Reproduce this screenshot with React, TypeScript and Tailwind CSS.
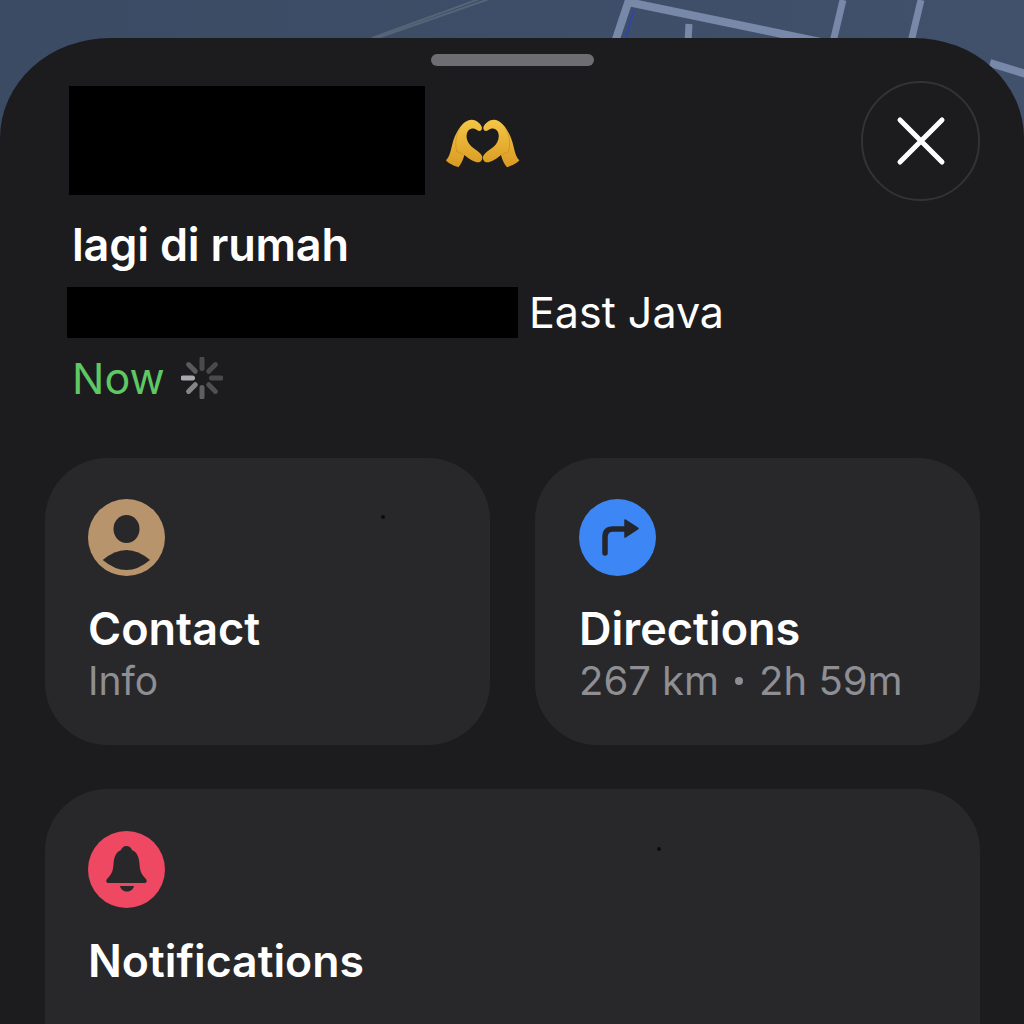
import { ReactNode } from "react";

const font = { fontFamily: '"Inter", "Liberation Sans", sans-serif' };

const handPath =
	"M48 182 C60 170 62 152 68 130 C78 95 100 60 125 60 C140 60 156 75 156 85 C156 94 148 96 142 92 C132 84 118 84 112 98 C106 112 112 130 126 142 C136 150 150 158 156 168 C160 178 153 188 145 188 C130 188 115 175 103 166 C100 180 92 195 85 203 C72 198 55 192 48 182 Z";

const MapLines = () => (
	<svg className="absolute left-0 top-0 blur-[0.5px]" width="1024" height="120" viewBox="0 0 1024 120" fill="none">
		<path d="M492 -2 L366 42 M482 -2 L372 38" stroke="#566477" strokeWidth="2" />
		<path d="M629 0 L614 45" stroke="#7788a8" strokeWidth="8" />
		<path d="M628 2 L830 44" stroke="#7788a8" strokeWidth="8" />
		<path d="M689 24 L688 42" stroke="#7788a8" strokeWidth="7" />
		<path d="M843 0 L833 42" stroke="#7788a8" strokeWidth="7" />
		<path d="M921 0 L911 42" stroke="#7788a8" strokeWidth="7" />
		<path d="M990 63 L1026 74" stroke="#7788a8" strokeWidth="8" />
		<path d="M634 10 L625 40" stroke="#2f45a8" strokeWidth="2" />
	</svg>
);

const HeartHands = () => (
	<svg width="75" height="50" viewBox="45 55 225 150">
		<defs>
			<linearGradient id="gold" x1="0" y1="0" x2="0" y2="1">
				<stop offset="0" stopColor="#f5c645" />
				<stop offset="1" stopColor="#d99a22" />
			</linearGradient>
		</defs>
		<path d={handPath} fill="url(#gold)" />
		<g transform="translate(316 0) scale(-1 1)">
			<path d={handPath} fill="url(#gold)" />
		</g>
		<path d="M90 85 C78 105 74 130 80 155 L100 165 M226 85 C238 105 242 130 236 155 L216 165" stroke="#b57f1f" strokeWidth="3" fill="none" opacity="0.45" />
	</svg>
);

const CloseButton = () => (
	<div className="absolute right-[44px] top-[43px] flex h-[120px] w-[119px] items-center justify-center rounded-full border-2 border-[#333336]">
		<svg width="52" height="52" viewBox="0 0 52 52" fill="none">
			<path d="M5 5 L47 47 M47 5 L5 47" stroke="#ffffff" strokeWidth="5" strokeLinecap="round" />
		</svg>
	</div>
);

const Spinner = () => {
	const spokes = [
		{ a: 0, c: "#4a4a4d" },
		{ a: 45, c: "#4a4a4d" },
		{ a: 90, c: "#4a4a4d" },
		{ a: 135, c: "#4f4f52" },
		{ a: 180, c: "#5f5f62" },
		{ a: 225, c: "#858589" },
		{ a: 270, c: "#a9a9ad" },
		{ a: 315, c: "#5a5a5d" },
	];
	return (
		<svg width="42" height="42" viewBox="-21 -21 42 42">
			{spokes.map((s) => (
				<line key={s.a} x1="0" y1="-9.5" x2="0" y2="-19" stroke={s.c} strokeWidth="5" strokeLinecap="round" transform={`rotate(${s.a})`} />
			))}
		</svg>
	);
};

const IconCircle = ({ color, children }: { color: string; children: ReactNode }) => (
	<svg width="77" height="77" viewBox="0 0 77 77">
		<circle cx="38.5" cy="38.5" r="38.5" fill={color} />
		{children}
	</svg>
);

const ContactIcon = () => (
	<IconCircle color="#b8946c">
		<ellipse cx="38.5" cy="30" rx="13" ry="14" fill="#28282b" />
		<path d="M14.7 61 Q38.5 41 62 61 Q38.5 81 14.7 61 Z" fill="#28282b" />
	</IconCircle>
);

const DirectionsIcon = () => (
	<IconCircle color="#3c87f5">
		<path d="M26 54 V38 Q26 30 34 30 H48" fill="none" stroke="#24262b" strokeWidth="5.5" strokeLinecap="round" />
		<path d="M46 21 L59 29.5 L46 38 Z" fill="#24262b" stroke="#24262b" strokeWidth="1.5" strokeLinejoin="round" />
	</IconCircle>
);

const BellIcon = () => (
	<IconCircle color="#ee4863">
		<path
			d="M38.5 15 C41 15 43 16.5 44 19 C49 21 51 26 51.5 33 C52 41 54 44 58 48 C59.5 50 58.5 52 56.5 52 H20.5 C18.5 52 17.5 50 19 48 C23 44 25 41 25.5 33 C26 26 28 21 33 19 C34 16.5 36 15 38.5 15 Z"
			fill="#28282b"
		/>
		<path d="M32 55 H46 C45 59 42 60.5 39 60.5 C36 60.5 33 59 32 55 Z" fill="#28282b" />
	</IconCircle>
);

const Speck = ({ className }: { className: string }) => <span className={`absolute h-[4px] w-[4px] rounded-full bg-[#0c0c0c] ${className}`} />;

export default function App() {
	return (
		<div className="relative h-[1024px] w-[1024px] overflow-hidden bg-gradient-to-r from-[#3c4b64] to-[#41506b] pt-[38px]" style={font}>
			<MapLines />
			<div className="relative h-[1100px] rounded-t-[110px_100px] bg-[#1c1c1e] pt-4">
				<div className="ml-[431px] h-[12px] w-[163px] rounded-full bg-[#6e6d72]" />
				<CloseButton />
				<div className="mt-[20px] flex items-center pl-[69px]">
					<div className="h-[109px] w-[356px] bg-black" />
					<div className="ml-[20px] mt-[5px]">
						<HeartHands />
					</div>
				</div>
				<div className="ml-[72px] mt-[25px] text-[45px] font-semibold leading-[50px] tracking-[-0.2px] text-white">lagi di rumah</div>
				<div className="ml-[67px] mt-[17px] flex items-center">
					<div className="h-[51px] w-[451px] bg-black" />
					<span className="ml-[11px] text-[43px] leading-[51px] text-white">East Java</span>
				</div>
				<div className="ml-[72px] mt-[15px] flex h-[50px] items-center">
					<span className="text-[43px] leading-[50px] text-[#5fc763]">Now</span>
					<span className="ml-[16px]">
						<Spinner />
					</span>
				</div>
				<div className="ml-[45px] mr-[44px] mt-[55px] grid grid-cols-2 gap-[45px]">
					<div className="relative h-[287px] rounded-[62px] bg-[#28282a] pl-[43px] pt-[41px]">
						<Speck className="left-[336px] top-[57px]" />
						<ContactIcon />
						<div className="mt-[25px] text-[45px] font-semibold leading-[56px] text-white">Contact</div>
						<div className="mt-[-1px] text-[39px] leading-[50px] text-[#8e8e93]">Info</div>
					</div>
					<div className="relative h-[287px] rounded-[62px] bg-[#28282a] pl-[44px] pt-[41px]">
						<DirectionsIcon />
						<div className="mt-[25px] text-[45px] font-semibold leading-[56px] text-white">Directions</div>
						<div className="mt-[-1px] flex items-center text-[40px] leading-[50px] text-[#8e8e93]">
							<span>267 km</span>
							<span className="mx-[16px] h-[8px] w-[8px] rounded-full bg-[#8e8e93]" />
							<span>2h 59m</span>
						</div>
					</div>
				</div>
				<div className="relative ml-[45px] mr-[44px] mt-[44px] h-[320px] rounded-[62px] bg-[#28282a] pl-[43px] pt-[42px]">
					<Speck className="left-[612px] top-[58px]" />
					<BellIcon />
					<div className="mt-[25px] text-[44.6px] font-semibold leading-[56px] text-white">Notifications</div>
				</div>
			</div>
		</div>
	);
}
